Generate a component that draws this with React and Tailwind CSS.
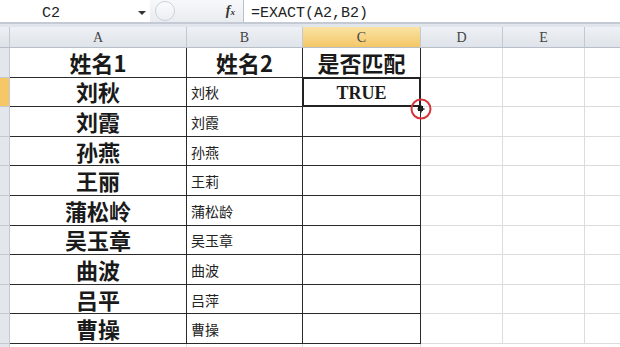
const cols = [
  { key: "A", w: "w-[177px]" },
  { key: "B", w: "w-[116px]" },
  { key: "C", w: "w-[118px]" },
  { key: "D", w: "w-[82px]" },
  { key: "E", w: "w-[82px]" },
];

const rows = [
  ["姓名1", "姓名2", "是否匹配"],
  ["刘秋", "刘秋", "TRUE"],
  ["刘霞", "刘霞", ""],
  ["孙燕", "孙燕", ""],
  ["王丽", "王莉", ""],
  ["蒲松岭", "蒲松龄", ""],
  ["吴玉章", "吴玉章", ""],
  ["曲波", "曲波", ""],
  ["吕平", "吕萍", ""],
  ["曹操", "曹操", ""],
];

const cjk = "font-['Noto_Sans_CJK_SC',sans-serif]";

function FormulaBar() {
  return (
    <div className="flex h-[24px] border-b-2 border-[#c3cad3] bg-white">
      <div className="relative w-[150px] pl-[42px] pt-[6px] font-['Liberation_Mono',monospace] text-[15px] leading-none text-[#222]">
        C2
        <span className="absolute right-[4px] top-[11px] h-0 w-0 border-x-[4px] border-t-[4px] border-x-transparent border-t-[#333]" />
      </div>
      <div className="relative flex w-[93px] items-center justify-end bg-gradient-to-b from-[#f7f8fa] to-[#e9ecf0] pr-[8px]">
        <span className="absolute left-[5px] top-[1px] h-[20px] w-[20px] rounded-full border border-[#cdd2d9] bg-gradient-to-b from-[#fafbfc] to-[#eceff3]" />
        <span className="font-['Liberation_Serif',serif] text-[14px] font-bold italic leading-none text-[#333]">
          f<span className="text-[9px]">x</span>
        </span>
      </div>
      <div className="flex-1 border-l border-[#b9c1cc] pl-[7px] pt-[6px] font-['Liberation_Mono',monospace] text-[15px] leading-none text-[#222]">
        =EXACT(A2,B2)
      </div>
    </div>
  );
}

function HeaderRow() {
  return (
    <div className="flex h-[21px] border-b border-[#b7bec8] font-['Liberation_Serif',serif] text-[14px] text-[#444]">
      <div className="w-[10px] shrink-0 border-r border-[#c3c9d1] bg-gradient-to-b from-[#edf0f4] to-[#dde2e8]" />
      {cols.map((c) => (
        <div
          key={c.key}
          className={`${c.w} shrink-0 flex items-center justify-center border-r border-[#c3c9d1] ${
            c.key === "C"
              ? "bg-gradient-to-b from-[#fbe3a4] to-[#f3c766]"
              : "bg-gradient-to-b from-[#eef1f5] to-[#dfe4ea]"
          }`}
        >
          {c.key}
        </div>
      ))}
      <div className="flex-1 bg-gradient-to-b from-[#eef1f5] to-[#dfe4ea]" />
    </div>
  );
}

function DataRow({ row, idx }) {
  const head = idx === 0;
  return (
    <div className="flex h-[29.6px]">
      <div
        className={`w-[10px] shrink-0 border-b border-r border-[#c3c9d1] ${
          idx === 1 ? "bg-[#f5c765]" : "bg-[#e3e7ed]"
        }`}
      />
      <div
        className={`w-[177px] shrink-0 flex items-center justify-center border-b border-r border-[#2a2a2a] ${cjk} text-[22px] font-bold text-[#1a1a1a]`}
      >
        {row[0]}
      </div>
      <div
        className={`w-[116px] shrink-0 flex items-center border-b border-r border-[#2a2a2a] ${cjk} ${
          head ? "justify-center text-[22px] font-bold text-[#1a1a1a]" : "pl-[4px] pt-[2px] text-[14px] text-[#222]"
        }`}
      >
        {row[1]}
      </div>
      <div
        className={`relative w-[118px] shrink-0 flex items-center justify-center border-b border-r border-[#2a2a2a] ${
          head
            ? `${cjk} text-[22px] font-bold text-[#1a1a1a]`
            : "pt-[4px] font-['Liberation_Serif',serif] text-[18px] font-bold text-[#1a1a1a]"
        }`}
      >
        {row[2]}
        {idx === 1 && (
          <span className="absolute inset-[-1px] border-2 border-[#222]" />
        )}
      </div>
      <div className="w-[82px] shrink-0 border-b border-r border-[#dcdcdc]" />
      <div className="w-[82px] shrink-0 border-b border-r border-[#dcdcdc]" />
      <div className="flex-1 border-b border-[#dcdcdc]" />
    </div>
  );
}

export default function App() {
  return (
    <div className="relative h-[347px] w-[620px] overflow-hidden bg-white">
      <FormulaBar />
      <div className="h-[3px] bg-[#e1e6ec]" />
      <HeaderRow />
      {rows.map((r, i) => (
        <DataRow key={i} row={r} idx={i} />
      ))}
      <div className="flex h-[10px]">
        <div className="w-[10px] border-r border-[#c3c9d1] bg-[#e3e7ed]" />
        <div className="w-[177px] border-r border-[#dcdcdc]" />
        <div className="w-[116px] border-r border-[#dcdcdc]" />
        <div className="w-[118px] border-r border-[#dcdcdc]" />
      </div>

      {/* fill handle + cursor mark */}
      <span className="absolute left-[418px] top-[106px] h-[5px] w-[5px] bg-[#111]" />
      <svg
        className="absolute left-[409px] top-[97px]"
        width="24"
        height="24"
        viewBox="0 0 24 24"
      >
        <circle cx="12" cy="12" r="9.5" fill="none" stroke="#d9343c" strokeWidth="2" />
        <path d="M12 8.5v7M8.5 12h7" stroke="#222" strokeWidth="1.5" />
      </svg>
    </div>
  );
}
